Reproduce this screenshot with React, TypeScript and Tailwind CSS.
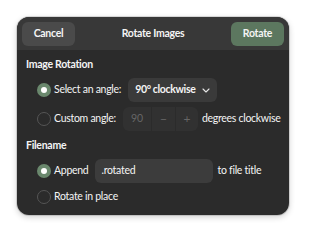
function Radio({ checked }: { checked?: boolean }) {
  if (checked) {
    return (
      <span className="flex h-[14px] w-[14px] shrink-0 items-center justify-center rounded-full bg-[#6a886d]">
        <span className="h-[6px] w-[6px] rounded-full bg-white" />
      </span>
    )
  }
  return <span className="h-[14px] w-[14px] shrink-0 rounded-full border border-[#555555]" />
}

export default function App() {
  return (
    <div
      className="h-[250px] w-[322px] whitespace-nowrap bg-white pl-[17px] pt-[17px] text-[10.5px] tracking-[-0.28px] text-[#f4f4f4]"
      style={{ fontFamily: 'Lato, "Noto Sans", sans-serif' }}
    >
      <div className="h-[198px] w-[272px] overflow-hidden rounded-[12px] bg-[#2b2b2b] shadow-[0_0_0_1px_rgba(0,0,0,0.12),0_2px_6px_rgba(0,0,0,0.2)]">
        <div className="flex h-[33px] items-center justify-between bg-[#383838] px-[5px]">
          <button className="h-[24px] w-[53px] rounded-[6px] bg-[#4a4a4a] font-bold">Cancel</button>
          <div className="font-bold">Rotate Images</div>
          <button className="h-[24px] w-[53px] rounded-[6px] bg-[#5c775f] font-bold">Rotate</button>
        </div>

        <div className="flex flex-col px-[9px]">
          <div className="mt-[7px] h-[14px] font-bold leading-[14px]">Image Rotation</div>

          <div className="ml-[11px] mt-[7px] flex h-[24px] items-center">
            <Radio checked />
            <span className="ml-[3px]">Select an angle:</span>
            <div className="ml-[7px] flex h-[24px] w-[89px] shrink-0 items-center rounded-[6px] bg-[#3a3a3a] pl-[7px]">
              <span className="font-bold tracking-[-0.35px]">90° clockwise</span>
              <svg className="ml-[7px]" width="8" height="5" viewBox="0 0 8 5" fill="none">
                <path d="M1 1l3 3 3-3" stroke="#e6e6e6" strokeWidth="1.1" strokeLinecap="round" strokeLinejoin="round" />
              </svg>
            </div>
          </div>

          <div className="ml-[11px] mt-[5px] flex h-[24px] items-center">
            <Radio />
            <span className="ml-[3px]">Custom angle:</span>
            <div className="ml-[7px] flex h-[24px] w-[75px] shrink-0 items-center rounded-[6px] bg-[#313131] text-[#666666]">
              <span className="w-[28px] text-center">90</span>
              <span className="h-full w-px bg-[#2b2b2b]" />
              <span className="w-[23px] text-center text-[12px]">−</span>
              <span className="h-full w-px bg-[#2b2b2b]" />
              <span className="flex-1 text-center text-[12px]">+</span>
            </div>
            <span className="ml-[4px]">degrees clockwise</span>
          </div>

          <div className="mt-[7px] h-[14px] font-bold leading-[14px]">Filename</div>

          <div className="ml-[11px] mt-[7px] flex h-[24px] items-center">
            <Radio checked />
            <span className="ml-[3px]">Append</span>
            <div className="ml-[7px] flex h-[24px] w-[118px] shrink-0 items-center rounded-[6px] bg-[#3c3c3c] pl-[6px]">
              .rotated
            </div>
            <span className="ml-[4px]">to file title</span>
          </div>

          <div className="ml-[11px] mt-[2px] flex h-[24px] items-center">
            <Radio />
            <span className="ml-[3px]">Rotate in place</span>
          </div>
        </div>
      </div>
    </div>
  )
}
